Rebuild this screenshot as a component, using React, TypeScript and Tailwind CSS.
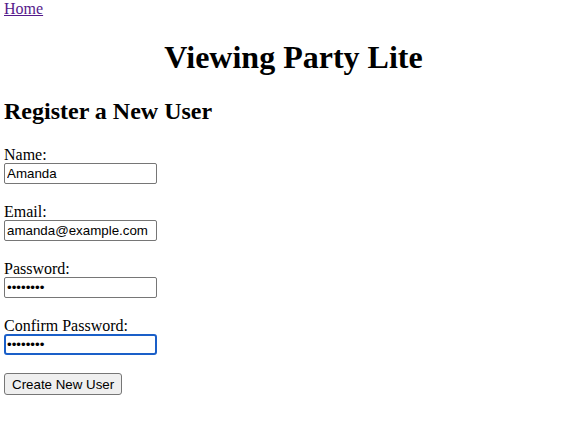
import React from "react";

const inputCls =
  "block w-[153px] h-[21px] border border-[#767676] rounded-[2px] px-[2px] bg-white text-[13.333px] leading-[15px] text-black outline-none";

export default function App() {
  return (
    <div className="min-h-[424px] bg-white text-black pl-1 text-[16px] leading-[18px]" style={{ fontFamily: '"Liberation Serif", serif' }}>
      <a href="#" className="text-[#551a8b] underline">Home</a>
      <h1 className="text-center pl-[7px] text-[32px] leading-[37px] font-bold mt-[21px] mb-[21px]">Viewing Party Lite</h1>
      <h2 className="text-[24px] leading-[28px] font-bold mt-0 mb-[21px]">Register a New User</h2>
      <form className="flex flex-col" onSubmit={(e) => e.preventDefault()}>
        <label className="block h-[17px]">Name:</label>
        <input className={inputCls} style={{ fontFamily: '"Liberation Sans", Arial, sans-serif' }} defaultValue="Amanda" />
        <div className="h-[19px]" />
        <label className="block h-[17px]">Email:</label>
        <input className={inputCls} style={{ fontFamily: '"Liberation Sans", Arial, sans-serif' }} defaultValue="amanda@example.com" />
        <div className="h-[19px]" />
        <label className="block h-[17px]">Password:</label>
        <input type="password" className={inputCls} style={{ fontFamily: '"Liberation Sans", Arial, sans-serif' }} defaultValue="password" />
        <div className="h-[19px]" />
        <label className="block h-[17px]">Confirm Password:</label>
        <input type="password" className={inputCls + " !border-2 !border-[#1a5fc8] !rounded-[3px] !px-[1px]"} style={{ fontFamily: '"Liberation Sans", Arial, sans-serif' }} defaultValue="password" autoFocus />
        <div className="h-[18px]" />
        <button type="submit" className="self-start h-[22px] px-[7px] border border-[#767676] rounded-[3px] bg-[#efefef] text-[13.333px] leading-[15px]" style={{ fontFamily: '"Liberation Sans", Arial, sans-serif' }}>Create New User</button>
      </form>
    </div>
  );
}
